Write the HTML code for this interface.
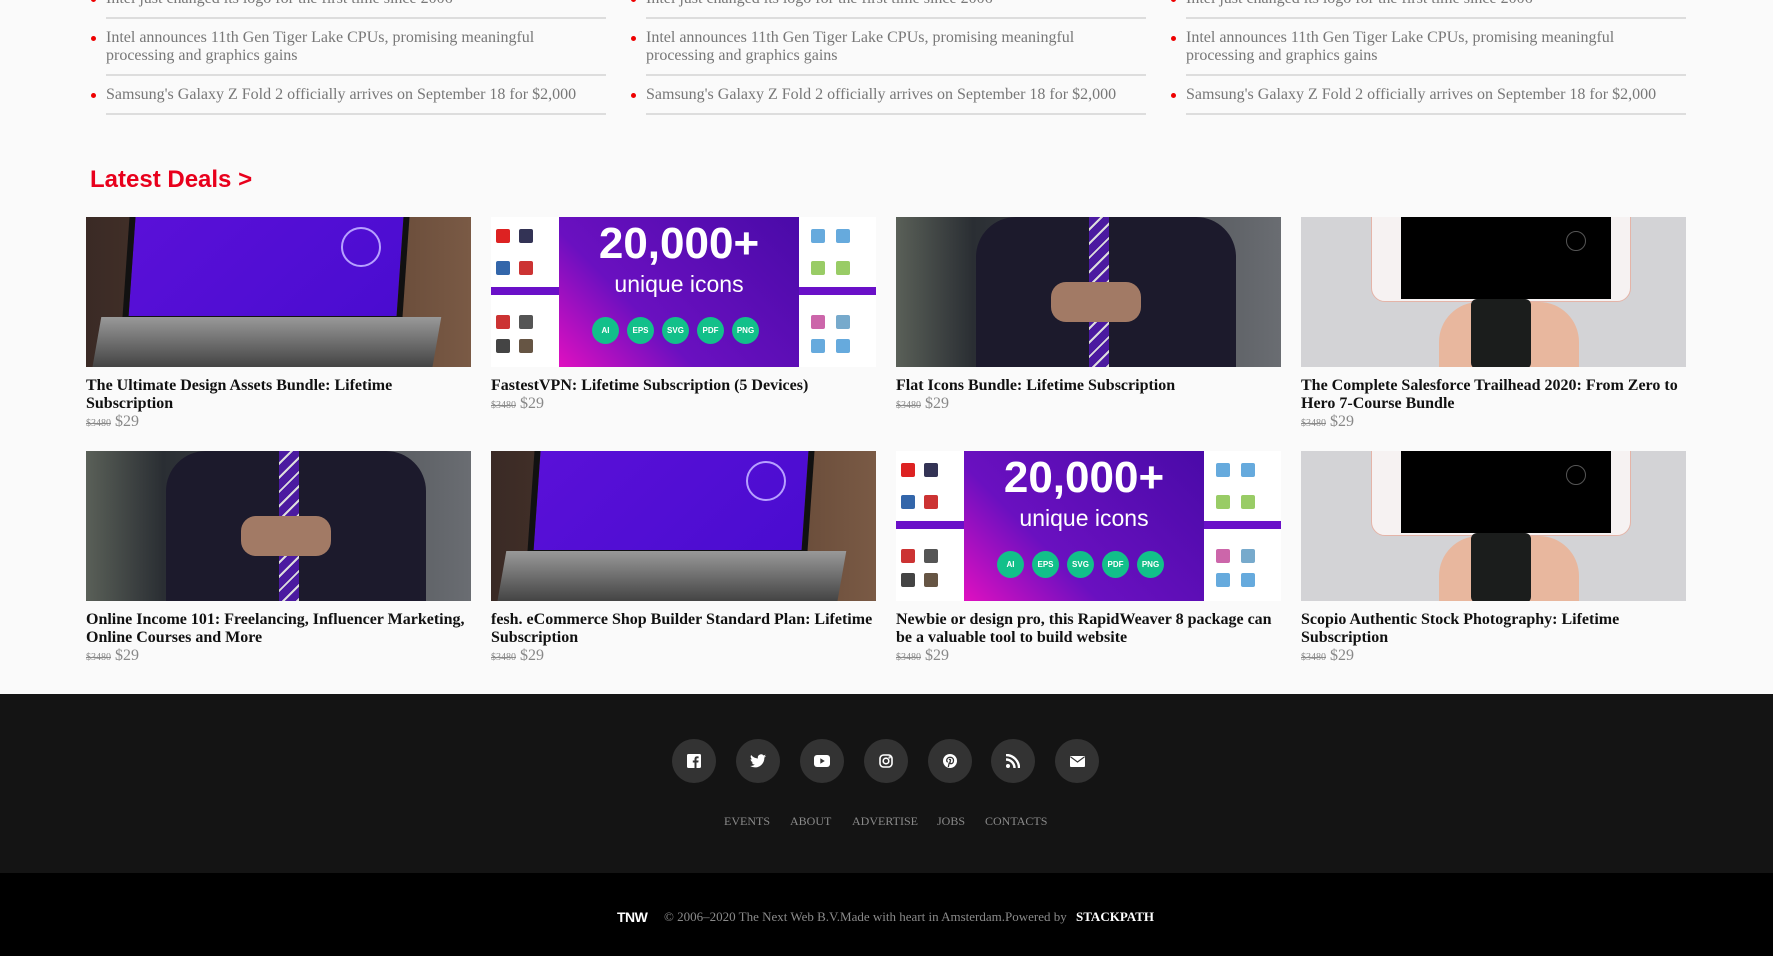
<!DOCTYPE html>
<html><head><meta charset="utf-8"><style>
*{margin:0;padding:0;box-sizing:border-box}
body{width:1773px;height:956px;background:#fafafa;position:relative;overflow:hidden;font-family:"Liberation Serif",serif}
.a{position:absolute}
.li{position:absolute;font-size:16px;color:#777;line-height:18px}
.li:before{content:"";position:absolute;left:-15px;top:7px;width:5px;height:5px;border-radius:50%;background:#e00}
.hr{position:absolute;height:2px;background:#ddd}
.card{position:absolute;width:385px}
.img{width:385px;height:150px;position:relative;overflow:hidden}
.t{font-weight:bold;font-size:16px;line-height:18px;color:#111;margin-top:10px}
.p{font-size:16px;color:#888;line-height:18px}
.p s{font-size:10px;margin-right:4px}
.laptop{background:linear-gradient(90deg,#3a2a25 0%,#5a4030 60%,#7a5a45 100%)}
.laptop .sc{position:absolute;left:40px;top:-5px;width:280px;height:110px;background:linear-gradient(135deg,#5a10d8,#4a0cd0);transform:skewX(-4deg);border:6px solid #111;border-top:0}
.laptop .kb{position:absolute;left:10px;top:100px;width:340px;height:60px;background:linear-gradient(#999,#333);transform:skewX(-10deg)}
.laptop .c{position:absolute;left:255px;top:10px;width:40px;height:40px;border-radius:50%;border:2px solid #b7a0ff}
.icons{background:#fff}
.icons .bx{position:absolute;left:68px;top:0;width:240px;height:150px;background:linear-gradient(45deg,#e010c0 0%,#6a10c0 35%,#4a0aa8 100%);color:#fff;text-align:center;font-family:"Liberation Sans",sans-serif}
.icons .bar{position:absolute;left:0;top:70px;width:385px;height:8px;background:#6a10c8}
.icons .dots{position:absolute;top:100px;left:33px}
.icons .dots span{display:inline-block;width:27px;height:27px;border-radius:50%;background:#12c08a;font-size:8px;font-weight:bold;line-height:27px;margin-right:8px}
.ic{position:absolute;width:14px;height:14px;border-radius:2px}
.man{background:linear-gradient(90deg,#5a6058 0%,#2a2e33 20%,#6a6d72 100%)}
.man .s{position:absolute;left:80px;top:0;width:260px;height:150px;background:#1c1a2c;border-radius:40px 40px 0 0}
.man .tie{position:absolute;left:193px;top:0;width:20px;height:150px;background:repeating-linear-gradient(135deg,#4b1aa0 0 8px,#ddd 8px 10px)}
.man .h{position:absolute;left:155px;top:65px;width:90px;height:40px;background:#a27a65;border-radius:15px}
.phone{background:#d3d3d6}
.phone .ph{position:absolute;left:70px;top:-10px;width:260px;height:95px;background:#f6f2f2;border-radius:0 0 14px 14px;border:1px solid #e4b4a8}
.phone .sc{position:absolute;left:100px;top:-10px;width:210px;height:92px;background:#000}
.phone .hb{position:absolute;left:265px;top:14px;width:20px;height:20px;border-radius:50%;border:1.5px solid #555}
.phone .hand{position:absolute;left:138px;top:85px;width:140px;height:80px;background:#e8b79e;border-radius:40px 40px 0 0}
.phone .st{position:absolute;left:170px;top:82px;width:60px;height:70px;background:#1b1d1c;border-radius:6px}
.soc{position:absolute;top:739px;width:44px;height:44px;border-radius:50%;background:#333;display:flex;align-items:center;justify-content:center}
.nav{position:absolute;top:814px;font-size:12px;color:#8a8a8a}
</style></head><body>

<div class="li" style="left:106px;top:-10px">Intel just changed its logo for the first time since 2006</div>
<div class="li" style="left:646px;top:-10px">Intel just changed its logo for the first time since 2006</div>
<div class="li" style="left:1186px;top:-10px">Intel just changed its logo for the first time since 2006</div>
<div class="hr" style="left:106px;width:500px;top:17px"></div>
<div class="hr" style="left:646px;width:500px;top:17px"></div>
<div class="hr" style="left:1186px;width:500px;top:17px"></div>
<div class="li" style="left:106px;top:29px">Intel announces 11th Gen Tiger Lake CPUs, promising meaningful<br>processing and graphics gains</div>
<div class="li" style="left:646px;top:29px">Intel announces 11th Gen Tiger Lake CPUs, promising meaningful<br>processing and graphics gains</div>
<div class="li" style="left:1186px;top:29px">Intel announces 11th Gen Tiger Lake CPUs, promising meaningful<br>processing and graphics gains</div>
<div class="hr" style="left:106px;width:500px;top:74px"></div>
<div class="hr" style="left:646px;width:500px;top:74px"></div>
<div class="hr" style="left:1186px;width:500px;top:74px"></div>
<div class="li" style="left:106px;top:86px">Samsung's Galaxy Z Fold 2 officially arrives on September 18 for $2,000</div>
<div class="li" style="left:646px;top:86px">Samsung's Galaxy Z Fold 2 officially arrives on September 18 for $2,000</div>
<div class="li" style="left:1186px;top:86px">Samsung's Galaxy Z Fold 2 officially arrives on September 18 for $2,000</div>
<div class="hr" style="left:106px;width:500px;top:113px"></div>
<div class="hr" style="left:646px;width:500px;top:113px"></div>
<div class="hr" style="left:1186px;width:500px;top:113px"></div>

<div class="a" style="left:90px;top:166px;font:bold 24px 'Liberation Sans',sans-serif;color:#e8001c">Latest Deals &gt;</div>

<!-- row 1 -->
<div class="card" style="left:86px;top:217px"><div class="img laptop"><div class="sc"></div><div class="c"></div><div class="kb"></div></div>
<div class="t">The Ultimate Design Assets Bundle: Lifetime Subscription</div><div class="p"><s>$3480</s>$29</div></div>

<div class="card" style="left:491px;top:217px"><div class="img icons"><div class="bar"></div>
<div class="ic" style="left:5px;top:12px;background:#d22"></div><div class="ic" style="left:28px;top:12px;background:#335"></div><div class="ic" style="left:5px;top:44px;background:#36a"></div><div class="ic" style="left:28px;top:44px;background:#c33"></div><div class="ic" style="left:5px;top:98px;background:#c33"></div><div class="ic" style="left:28px;top:98px;background:#555"></div><div class="ic" style="left:5px;top:122px;background:#444"></div><div class="ic" style="left:28px;top:122px;background:#654"></div>
<div class="ic" style="left:320px;top:12px;background:#6ad"></div><div class="ic" style="left:345px;top:12px;background:#6ad"></div><div class="ic" style="left:320px;top:44px;background:#9c6"></div><div class="ic" style="left:345px;top:44px;background:#9c6"></div><div class="ic" style="left:320px;top:98px;background:#c6a"></div><div class="ic" style="left:345px;top:98px;background:#7ac"></div><div class="ic" style="left:320px;top:122px;background:#6ad"></div><div class="ic" style="left:345px;top:122px;background:#6ad"></div>
<div class="bx"><div style="font-size:44px;font-weight:bold;line-height:46px;margin-top:4px">20,000+</div><div style="font-size:23px;margin-top:4px">unique icons</div><div class="dots"><span>AI</span><span>EPS</span><span>SVG</span><span>PDF</span><span>PNG</span></div></div></div>
<div class="t">FastestVPN: Lifetime Subscription (5 Devices)</div><div class="p"><s>$3480</s>$29</div></div>

<div class="card" style="left:896px;top:217px"><div class="img man"><div class="s"></div><div class="tie"></div><div class="h"></div></div>
<div class="t">Flat Icons Bundle: Lifetime Subscription</div><div class="p"><s>$3480</s>$29</div></div>

<div class="card" style="left:1301px;top:217px"><div class="img phone"><div class="ph"></div><div class="sc"></div><div class="hb"></div><div class="hand"></div><div class="st"></div></div>
<div class="t">The Complete Salesforce Trailhead 2020: From Zero to Hero 7-Course Bundle</div><div class="p"><s>$3480</s>$29</div></div>

<!-- row 2 -->
<div class="card" style="left:86px;top:451px"><div class="img man"><div class="s"></div><div class="tie"></div><div class="h"></div></div>
<div class="t">Online Income 101: Freelancing, Influencer Marketing, Online Courses and More</div><div class="p"><s>$3480</s>$29</div></div>

<div class="card" style="left:491px;top:451px"><div class="img laptop"><div class="sc"></div><div class="c"></div><div class="kb"></div></div>
<div class="t">fesh. eCommerce Shop Builder Standard Plan: Lifetime Subscription</div><div class="p"><s>$3480</s>$29</div></div>

<div class="card" style="left:896px;top:451px"><div class="img icons"><div class="bar"></div>
<div class="ic" style="left:5px;top:12px;background:#d22"></div><div class="ic" style="left:28px;top:12px;background:#335"></div><div class="ic" style="left:5px;top:44px;background:#36a"></div><div class="ic" style="left:28px;top:44px;background:#c33"></div><div class="ic" style="left:5px;top:98px;background:#c33"></div><div class="ic" style="left:28px;top:98px;background:#555"></div><div class="ic" style="left:5px;top:122px;background:#444"></div><div class="ic" style="left:28px;top:122px;background:#654"></div>
<div class="ic" style="left:320px;top:12px;background:#6ad"></div><div class="ic" style="left:345px;top:12px;background:#6ad"></div><div class="ic" style="left:320px;top:44px;background:#9c6"></div><div class="ic" style="left:345px;top:44px;background:#9c6"></div><div class="ic" style="left:320px;top:98px;background:#c6a"></div><div class="ic" style="left:345px;top:98px;background:#7ac"></div><div class="ic" style="left:320px;top:122px;background:#6ad"></div><div class="ic" style="left:345px;top:122px;background:#6ad"></div>
<div class="bx"><div style="font-size:44px;font-weight:bold;line-height:46px;margin-top:4px">20,000+</div><div style="font-size:23px;margin-top:4px">unique icons</div><div class="dots"><span>AI</span><span>EPS</span><span>SVG</span><span>PDF</span><span>PNG</span></div></div></div>
<div class="t">Newbie or design pro, this RapidWeaver 8 package can be a valuable tool to build website</div><div class="p"><s>$3480</s>$29</div></div>

<div class="card" style="left:1301px;top:451px"><div class="img phone"><div class="ph"></div><div class="sc"></div><div class="hb"></div><div class="hand"></div><div class="st"></div></div>
<div class="t">Scopio Authentic Stock Photography: Lifetime Subscription</div><div class="p"><s>$3480</s>$29</div></div>

<!-- footer -->
<div class="a" style="left:0;top:694px;width:1773px;height:179px;background:#141414"></div>
<div class="a" style="left:0;top:873px;width:1773px;height:83px;background:#000"></div>

<div class="soc" style="left:672px"><svg width="14" height="14" viewBox="0 0 14 14"><rect width="14" height="14" rx="1.5" fill="#fff"/><path d="M9.5 14V8.5h1.8l.3-2H9.5V5.3c0-.6.2-1 1-1h1.1V2.5C11.3 2.4 10.7 2.4 10 2.4c-1.5 0-2.5.9-2.5 2.6v1.5H5.8v2h1.7V14z" fill="#333"/></svg></div>
<div class="soc" style="left:736px"><svg width="16" height="14" viewBox="0 0 24 20"><path d="M24 2.4c-.9.4-1.8.6-2.8.8 1-.6 1.800-1.6 2.2-2.7-1 .6-2 1-3.1 1.2A4.9 4.9 0 0 0 11.9 6.2 14 14 0 0 1 1.7 1 4.9 4.9 0 0 0 3.2 7.6 4.9 4.9 0 0 1 1 7v.1a4.9 4.9 0 0 0 3.9 4.8 5 5 0 0 1-2.2.1 4.9 4.9 0 0 0 4.6 3.4A9.9 9.9 0 0 1 0 17.4 14 14 0 0 0 7.5 19.6c9 0 14-7.5 14-14v-.6c1-.7 1.8-1.6 2.5-2.6z" fill="#fff"/></svg></div>
<div class="soc" style="left:800px"><svg width="16" height="12" viewBox="0 0 16 12"><rect width="16" height="12" rx="3" fill="#fff"/><path d="M6.3 3.3v5.4L10.8 6z" fill="#333"/></svg></div>
<div class="soc" style="left:864px"><svg width="14" height="14" viewBox="0 0 14 14" fill="none" stroke="#fff" stroke-width="1.6"><rect x="1" y="1" width="12" height="12" rx="3.5"/><circle cx="7" cy="7" r="2.8"/><circle cx="10.6" cy="3.4" r=".4" fill="#fff"/></svg></div>
<div class="soc" style="left:928px"><svg width="14" height="14" viewBox="0 0 14 14"><circle cx="7" cy="7" r="7" fill="#fff"/><path d="M6.3 8.5 5.3 13M7.2 3.3c-2.4 0-3.5 1.6-3.5 3 0 .8.3 1.5 1 1.8M7.2 3.3c2 0 3.3 1.3 3.3 3 0 2-1 3.4-2.4 3.4-.8 0-1.3-.6-1.1-1.4l.5-2c.2-.9-.9-1.2-1.3-.3" stroke="#333" stroke-width="1.3" fill="none"/></svg></div>
<div class="soc" style="left:991px"><svg width="14" height="14" viewBox="0 0 14 14"><circle cx="2" cy="12" r="2" fill="#fff"/><path d="M0 5.5A8.5 8.5 0 0 1 8.5 14M0 1a13 13 0 0 1 13 13" stroke="#fff" stroke-width="2.4" fill="none"/></svg></div>
<div class="soc" style="left:1055px"><svg width="15" height="11" viewBox="0 0 15 11"><rect width="15" height="11" rx="1" fill="#fff"/><path d="M.5 .8 7.5 6 14.5 .8" stroke="#333" stroke-width="1.2" fill="none"/></svg></div>

<div class="nav" style="left:724px">EVENTS</div>
<div class="nav" style="left:790px">ABOUT</div>
<div class="nav" style="left:852px">ADVERTISE</div>
<div class="nav" style="left:937px">JOBS</div>
<div class="nav" style="left:985px">CONTACTS</div>

<div class="a" style="left:617px;top:909px;font:900 14px 'Liberation Sans',sans-serif;color:#fff;letter-spacing:-0.5px">TNW</div>
<div class="a" style="left:664px;top:909px;font-size:13px;color:#8a8a8a">© 2006–2020 The Next Web B.V.Made with heart in Amsterdam.Powered by</div>
<div class="a" style="left:1076px;top:909px;font-size:13px;font-weight:bold;color:#fff">STACKPATH</div>
</body></html>
